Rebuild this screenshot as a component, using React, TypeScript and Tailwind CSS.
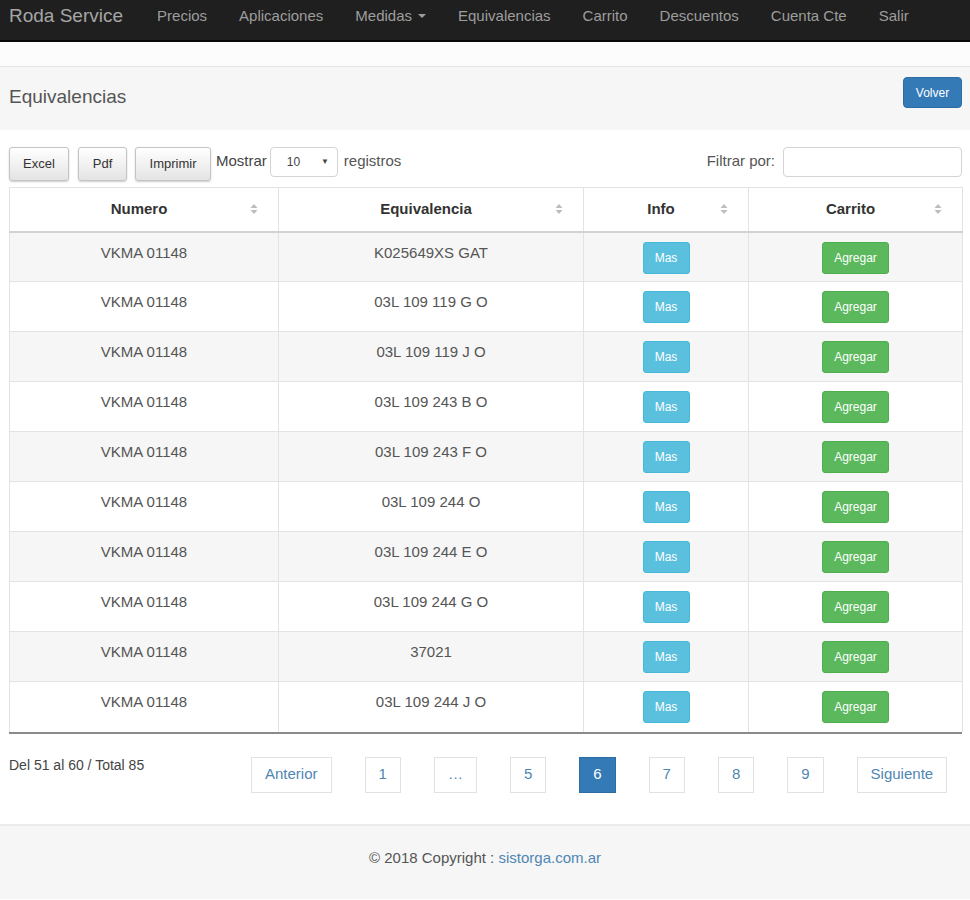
import React from 'react';

const navItems = ['Precios', 'Aplicaciones', 'Medidas', 'Equivalencias', 'Carrito', 'Descuentos', 'Cuenta Cte', 'Salir'];

const rows = [
  'K025649XS GAT',
  '03L 109 119 G O',
  '03L 109 119 J O',
  '03L 109 243 B O',
  '03L 109 243 F O',
  '03L 109 244 O',
  '03L 109 244 E O',
  '03L 109 244 G O',
  '37021',
  '03L 109 244 J O',
];

const columns = [
  { label: 'Numero', width: 269 },
  { label: 'Equivalencia', width: 305 },
  { label: 'Info', width: 165 },
  { label: 'Carrito', width: 214 },
];

function SortIcon() {
  return (
    <svg width="8" height="12" viewBox="0 0 8 12" className="absolute right-[20px] top-1/2 -translate-y-1/2">
      <path d="M4 1 L7.5 5 L0.5 5 Z" fill="#bdbdbd" />
      <path d="M4 11 L7.5 7 L0.5 7 Z" fill="#bdbdbd" />
    </svg>
  );
}

function ToolButton({ label, className }: { label: string; className: string }) {
  return (
    <button
      className={`h-[34px] text-[13px] text-[#333] rounded-[3px] border border-[#c4c4c4] bg-gradient-to-b from-white to-[#e4e4e4] shadow-[0_1px_2px_rgba(0,0,0,0.2)] ${className}`}
    >
      {label}
    </button>
  );
}

function PageButton({ label, active = false }: { label: string; active?: boolean }) {
  return (
    <button
      className={
        active
          ? 'h-[36px] min-w-[36px] px-[13px] text-[15px] text-white bg-[#337ab7] border border-[#2e6da4]'
          : 'h-[36px] min-w-[35px] px-[13px] text-[15px] text-[#4f86b4] bg-white border border-[#e2e2e2]'
      }
    >
      {label}
    </button>
  );
}

export default function App() {
  return (
    <div className="w-[970px] min-h-[900px] bg-white text-[#333]" style={{ fontFamily: '"Liberation Sans", Arial, sans-serif' }}>
      {/* Navbar */}
      <nav className="h-[42px] bg-[#1f1f1f] border-b-2 border-[#080808] flex items-start pt-[5px] pl-[9px]">
        <span className="text-[19px] leading-[22px] text-[#a6a6a6] mr-[34px]">Roda Service</span>
        <ul className="flex items-center gap-[32px] h-[22px]">
          {navItems.map((item) => (
            <li key={item} className="text-[15px] text-[#9d9d9d] flex items-center">
              {item}
              {item === 'Medidas' && (
                <span className="ml-[6px] inline-block w-0 h-0 border-l-[4px] border-r-[4px] border-t-[4px] border-l-transparent border-r-transparent border-t-[#9d9d9d]" />
              )}
            </li>
          ))}
        </ul>
      </nav>

      {/* Page header */}
      <div className="h-[24px] bg-[#fcfcfc]" />
      <div className="h-[64px] bg-[#f6f6f6] border-t border-[#e6e6e6] flex justify-between items-start pl-[9px] pr-[8px]">
        <h1 className="mt-[19px] text-[19px] leading-[22px] text-[#555]">Equivalencias</h1>
        <button className="mt-[10px] h-[31px] w-[59px] rounded-[4px] bg-[#337ab7] border border-[#2e6da4] text-white text-[12px]">
          Volver
        </button>
      </div>

      {/* Content */}
      <div className="pl-[9px] pr-[8px] pt-[17px]">
        <div className="flex items-start justify-between">
          <div className="flex items-start">
            <ToolButton label="Excel" className="w-[60px]" />
            <ToolButton label="Pdf" className="ml-[9px] w-[49px]" />
            <ToolButton label="Imprimir" className="ml-[8px] w-[76px]" />
            <span className="ml-[5px] mt-[5px] text-[15px] leading-[18px] text-[#444]">Mostrar</span>
            <div className="ml-[3px] h-[30px] w-[68px] rounded-[4px] border border-[#d4d4d4] bg-white flex items-center justify-between pl-[16px] pr-[8px] text-[12px] text-[#444]">
              <span>10</span>
              <span className="text-[8px]">▼</span>
            </div>
            <span className="ml-[6px] mt-[5px] text-[15px] leading-[18px] text-[#555]">registros</span>
          </div>
          <div className="flex items-start">
            <span className="mt-[5px] text-[15px] leading-[18px] text-[#555]">Filtrar por:</span>
            <input className="ml-[8px] h-[30px] w-[179px] rounded-[4px] border border-[#d4d4d4] bg-white outline-none" />
          </div>
        </div>

        <table className="mt-[6px] w-[953px] table-fixed border-collapse">
          <colgroup>
            {columns.map((c) => (
              <col key={c.label} style={{ width: c.width }} />
            ))}
          </colgroup>
          <thead>
            <tr className="h-[44px]">
              {columns.map((c) => (
                <th
                  key={c.label}
                  className="relative pr-[10px] border border-[#e3e3e3] border-b-2 border-b-[#d2d2d2] text-[15px] font-bold text-[#333] text-center"
                >
                  {c.label}
                  <SortIcon />
                </th>
              ))}
            </tr>
          </thead>
          <tbody>
            {rows.map((eq, i) => (
              <tr key={i} className={i % 2 === 0 ? 'bg-[#f6f6f6]' : 'bg-white'}>
                <td className="h-[50px] align-top pt-[9px] text-center text-[15px] leading-[21px] text-[#555] border-l border-[#e3e3e3] border-t">
                  VKMA 01148
                </td>
                <td className="align-top pt-[9px] text-center text-[15px] leading-[21px] text-[#555] border-l border-[#e3e3e3] border-t">
                  {eq}
                </td>
                <td className="align-top pt-[9px] text-center border-l border-[#e3e3e3] border-t">
                  <button className="h-[32px] w-[47px] rounded-[3px] bg-[#5bc0de] border border-[#46b8da] text-white text-[12px]">
                    Mas
                  </button>
                </td>
                <td className="align-top pt-[9px] text-center border-l border-r border-[#e3e3e3] border-t">
                  <button className="h-[32px] w-[67px] rounded-[3px] bg-[#5cb85c] border border-[#4cae4c] text-white text-[12px]">
                    Agregar
                  </button>
                </td>
              </tr>
            ))}
          </tbody>
        </table>
        <div className="w-[953px] h-[2px] bg-[#8a8a8a]" />

        {/* Pagination */}
        <div className="flex items-start mt-[23px] h-[67px]">
          <span className="w-[242px] text-[14px] leading-[16px] text-[#444]">Del 51 al 60 / Total 85</span>
          <div className="flex gap-[33px]">
            <PageButton label="Anterior" />
            <PageButton label="1" />
            <PageButton label="…" />
            <PageButton label="5" />
            <PageButton label="6" active />
            <PageButton label="7" />
            <PageButton label="8" />
            <PageButton label="9" />
            <PageButton label="Siguiente" />
          </div>
        </div>
      </div>

      {/* Footer */}
      <footer className="h-[75px] bg-[#f6f6f6] border-t-2 border-[#ebebeb] pt-[22px] text-center text-[15px] leading-[20px] text-[#555]">
        © 2018 Copyright : <span className="text-[#4f86b4]">sistorga.com.ar</span>
      </footer>
    </div>
  );
}
